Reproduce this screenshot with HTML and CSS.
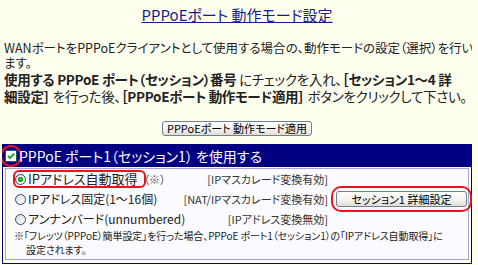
FILE: index.html
```html
<!DOCTYPE html>
<html lang="ja">
<head>
  <meta charset="UTF-8">
  <title>PPPoEポート 動作モード設定</title>
  <link rel="stylesheet" href="styles.css">
</head>
<body>
  <h1 class="title">PPPoEポート 動作モード設定</h1>

  <p class="lead">WANポートをPPPoEクライアントとして使用する場合の、動作モードの設定（選択）を行い<br>ます。</p>

  <p class="guide"><b>使用する PPPoE ポート（セッション）番号</b> にチェックを入れ、<b>［セッション1～4 詳<br>細設定］</b> を行った後、<b>［PPPoEポート 動作モード適用］</b> ボタンをクリックして下さい。</p>

  <div class="apply">
    <button class="btn apply-btn">PPPoEポート 動作モード適用</button>
  </div>

  <div class="session">
    <div class="session-head">
      <label class="head-label">
        <span class="chk-ring">
          <svg class="chk" width="12" height="12" viewBox="0 0 12 12">
            <rect x="0.5" y="0.5" width="11" height="11" fill="#fff" stroke="#1c5180"/>
            <path d="M3 5.8 L5 8 L9.2 3.6" fill="none" stroke="#21a121" stroke-width="2"/>
          </svg>
        </span>
        PPPoE ポート1（セッション1） を使用する
      </label>
    </div>

    <div class="session-body">
      <div class="mode-grid">
        <label class="mode">
          <span class="mark"><input type="radio" name="mode1" checked>IPアドレス自動取得</span><small>（※）</small>
        </label>
        <span class="tag">[IPマスカレード変換有効]</span>
        <span></span>

        <label class="mode mode-sm"><input type="radio" name="mode1">IPアドレス固定(1～16個)</label>
        <span class="tag">[NAT/IPマスカレード変換有効]</span>
        <span class="detail"><button class="btn detail-btn">セッション1 詳細設定</button></span>

        <label class="mode mode-sm"><input type="radio" name="mode1">アンナンバード(unnumbered)</label>
        <span class="tag">[IPアドレス変換無効]</span>
        <span></span>
      </div>

      <p class="note">※「フレッツ（PPPoE）簡単設定」を行った場合、PPPoE ポート1（セッション1）の「IPアドレス自動取得」に<br>設定されます。</p>
    </div>
  </div>
</body>
</html>
```

FILE: styles.css
```css
body {
  margin: 0 6px 0 2px;
  background-color: #fffff0;
  color: #222;
  font-family: "Noto Sans CJK JP", sans-serif;
  font-feature-settings: "palt";
}
.title {
  margin: 5px 0 0;
  font-size: 15px;
  font-weight: normal;
  line-height: 20px;
  text-align: center;
  color: #1a1a8c;
  text-decoration: underline;
}
.lead {
  margin: 15px 0 0;
  padding-left: 2px;
  font-size: 12.5px;
  line-height: 15px;
  white-space: nowrap;
}
.guide {
  margin: 1px 0 0;
  padding-left: 2px;
  font-size: 13.5px;
  line-height: 17px;
  letter-spacing: -0.3px;
  white-space: nowrap;
}
.apply {
  display: flex;
  justify-content: center;
  margin-top: 16px;
}
.btn {
  padding: 0;
  border: 1px solid #6f7f96;
  border-radius: 3px;
  background: linear-gradient(#ffffff, #f2f1ec 60%, #dedcd4);
  color: #000;
  font-family: inherit;
  font-feature-settings: "palt";
  font-size: 11px;
  line-height: 13px;
  cursor: pointer;
}
.apply-btn {
  width: 150px;
  height: 15px;
}
.session {
  margin-top: 8px;
  border: 1px solid #000080;
}
.session-head {
  display: flex;
  align-items: center;
  height: 22px;
  padding-left: 2px;
  background-color: #000080;
  color: #fff;
  font-size: 14px;
}
.head-label {
  display: flex;
  align-items: center;
  gap: 2px;
}
.chk-ring {
  display: inline-flex;
  border-radius: 50%;
  outline: 2px solid #e8141b;
  outline-offset: 3px;
}
.chk {
  display: block;
}
.session-body {
  margin: 1px 2px 3px;
  padding-bottom: 2px;
  border: 1px solid #a5a5d2;
  background-color: #fbfbff;
}
.mode-grid {
  display: grid;
  grid-template-columns: minmax(0, 1fr) auto 131px;
  grid-auto-rows: 20px;
  column-gap: 8px;
  align-items: center;
  padding: 0 1px 0 9px;
}
.mode {
  display: flex;
  align-items: center;
  font-size: 13px;
  line-height: 14px;
  white-space: nowrap;
}
.mode-sm {
  font-size: 12px;
}
.mode input {
  appearance: none;
  flex: none;
  width: 11px;
  height: 11px;
  margin: 0 2px 0 0;
  border: 1px solid #1c5180;
  border-radius: 50%;
  background: linear-gradient(135deg, #dcdad2, #ffffff);
}
.mode input:checked {
  background: radial-gradient(circle, #3cb83c 0, #21a121 2.5px, transparent 3px), linear-gradient(135deg, #dcdad2, #ffffff);
}
.mark {
  display: flex;
  align-items: center;
  padding-right: 6px;
  border-radius: 4px;
  outline: 2px solid #e8141b;
}
.mode small {
  font-size: 11px;
  color: #555;
}
.tag {
  font-size: 11px;
  color: #333;
  text-align: right;
  white-space: nowrap;
}
.detail {
  display: flex;
  border-radius: 5px;
  outline: 2px solid #e8141b;
  outline-offset: 3px;
}
.detail-btn {
  width: 131px;
  height: 16px;
}
.note {
  margin: 0;
  padding-left: 20px;
  text-indent: -12px;
  font-size: 10px;
  line-height: 14px;
  letter-spacing: -0.1px;
  white-space: nowrap;
}
```
